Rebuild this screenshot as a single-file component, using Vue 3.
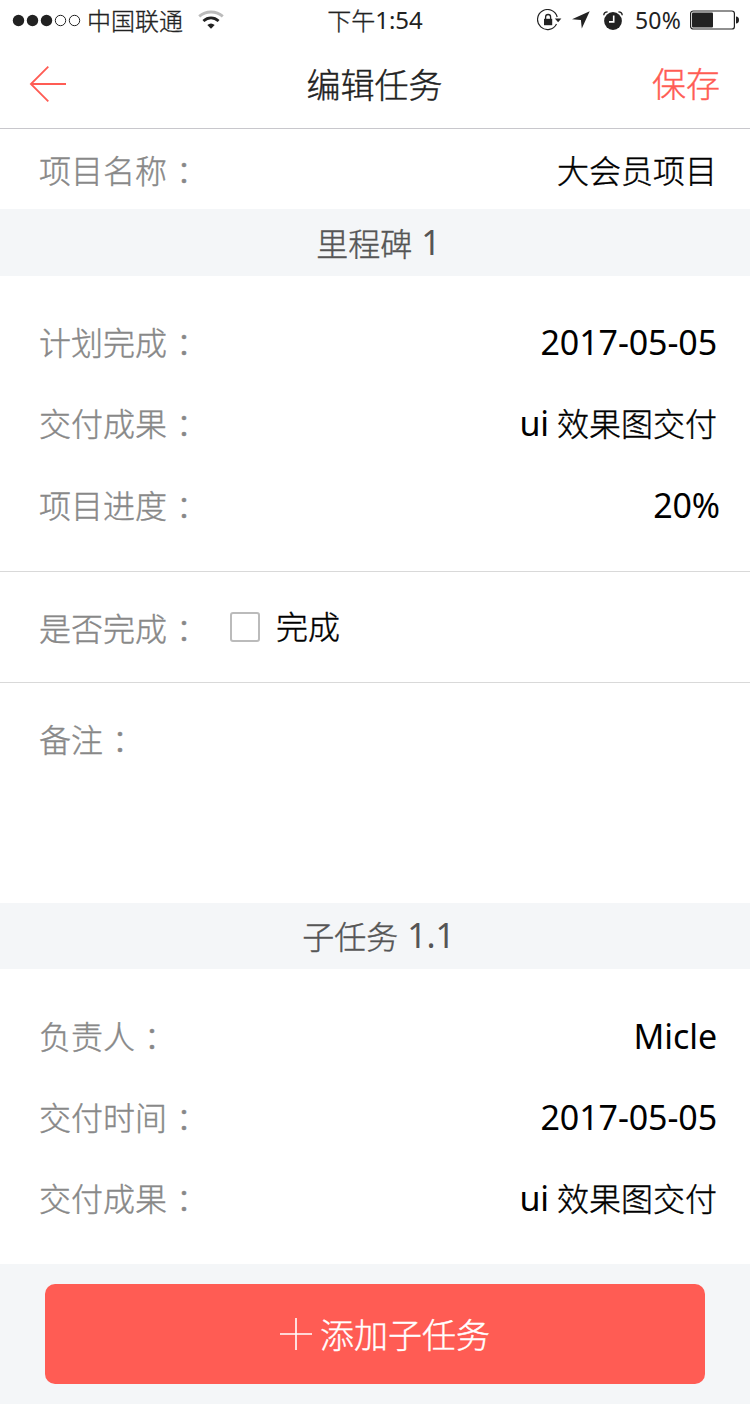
<script setup>
const planRows = [
  { label: '计划完成', latin: '2017-05-05', cjk: '' },
  { label: '交付成果', latin: 'ui', cjk: '效果图交付' },
  { label: '项目进度', latin: '20%', cjk: '', cls: 'flush' },
]
const subRows = [
  { label: '负责人', latin: 'Micle', cjk: '' },
  { label: '交付时间', latin: '2017-05-05', cjk: '' },
  { label: '交付成果', latin: 'ui', cjk: '效果图交付' },
]
</script>

<template>
  <div class="page">
    <div class="status">
      <div class="left">
        <svg class="dots" width="70" height="14" viewBox="0 0 70 14">
          <g fill="#222"><circle cx="6.5" cy="7.5" r="5.7" /><circle cx="20.5" cy="7.5" r="5.7" /><circle cx="34.5" cy="7.5" r="5.7" /></g>
          <g fill="none" stroke="#222" stroke-width="1"><circle cx="48.5" cy="7.5" r="5.2" /><circle cx="62.5" cy="7.5" r="5.2" /></g>
        </svg>
        <span class="carrier">中国联通</span>
        <svg class="wifi" width="26" height="20" viewBox="0 0 26 20">
          <path d="M1.2 6.4C7.8.5 18.2.5 24.8 6.4" fill="none" stroke="#bbb" stroke-width="2.8" />
          <path d="M5.4 11C10 7 16 7 20.6 11" fill="none" stroke="#222" stroke-width="2.8" />
          <path d="M9.3 15Q13 12 16.7 15L13 18.8Z" fill="#222" />
        </svg>
      </div>
      <div class="time"><span>下午</span><span class="lt">1:54</span></div>
      <div class="right">
        <svg class="lock" width="26" height="22" viewBox="0 0 26 22">
          <path d="M20.2 8A10 10 0 1 0 19.5 15" fill="none" stroke="#222" stroke-width="1.2" />
          <path d="M17.8 9.4h6.6l-3.3 3.8z" fill="#222" />
          <path d="M7 9.8h8.2v6.4H7z" fill="#222" />
          <path d="M8.6 10V8a2.5 2.5 0 0 1 5 0v2" fill="none" stroke="#222" stroke-width="1.3" />
        </svg>
        <svg class="loc" width="18" height="18" viewBox="0 0 18 18"><path d="M17.7.2L0 8.2l8.9.9.9 8.4z" fill="#222" /></svg>
        <svg class="alarm" width="20" height="19" viewBox="0 0 20 19">
          <circle cx="10" cy="10" r="8.9" fill="#222" />
          <path d="M.8 4.3Q.9 1 4.6.9M15.4.9Q19.1 1 19.2 4.3" fill="none" stroke="#222" stroke-width="1.4" />
          <path d="M10.7 4.6v6.3H6" fill="none" stroke="#fff" stroke-width="1.6" />
        </svg>
        <span class="pct">50%</span>
        <svg class="bat" width="50" height="20" viewBox="0 0 50 20">
          <rect x=".6" y="1" width="43.8" height="18" rx="2.6" fill="none" stroke="#222" stroke-width="1.2" />
          <rect x="2" y="2.6" width="21" height="14.8" rx="1" fill="#222" />
          <path d="M46 6.6Q49 6.7 49 10T46 13.4z" fill="#222" />
        </svg>
      </div>
    </div>

    <header class="nav">
      <svg class="back" width="38" height="38" viewBox="0 0 38 38"><path d="M37 19H2M19.3 1.6L1.9 19l17.4 17.3" fill="none" stroke="#ff5c54" stroke-width="1.8" /></svg>
      <h1>编辑任务</h1>
      <span class="save">保存</span>
    </header>

    <div class="row project">
      <span class="label">项目名称<i>：</i></span>
      <span class="value"><span>大会员项目</span></span>
    </div>

    <div class="band"><span>里程碑</span><b>1</b></div>

    <section class="group plan">
      <div v-for="r in planRows" :key="r.label" class="row">
        <span class="label">{{ r.label }}<i>：</i></span>
        <span class="value" :class="r.cls"><b>{{ r.latin }}</b><span v-if="r.cjk">{{ r.cjk }}</span></span>
      </div>
    </section>

    <div class="done">
      <span class="label">是否完成<i>：</i></span>
      <span class="box"></span>
      <span class="done-text">完成</span>
    </div>

    <div class="remark"><span class="label">备注<i>：</i></span></div>

    <div class="band sub"><span>子任务</span><b>1.1</b></div>

    <section class="group">
      <div v-for="r in subRows" :key="r.label" class="row">
        <span class="label">{{ r.label }}<i>：</i></span>
        <span class="value"><b>{{ r.latin }}</b><span v-if="r.cjk">{{ r.cjk }}</span></span>
      </div>
    </section>

    <footer>
      <div class="add">
        <svg width="32" height="32" viewBox="0 0 32 32"><path d="M0 16h32M16 0v32" stroke="#fff" stroke-width="1.6" /></svg>
        <span>添加子任务</span>
      </div>
    </footer>
  </div>
</template>

<style>
body { background: #fff; }
</style>

<style scoped>
* { box-sizing: border-box; }
.page {
  width: 750px; height: 1404px; background: #fff; color: #000; overflow: hidden;
  display: flex; flex-direction: column;
  font-family: "Noto Sans CJK SC", sans-serif; font-weight: 300; font-size: 32px; line-height: 40px;
  -webkit-text-stroke: 0.4px currentColor;
}
.page > * { flex: none; }
b, .lt, .pct { font-family: "Noto Sans", "Open Sans", sans-serif; font-weight: 400; -webkit-text-stroke: 0; }
b { font-size: 34px; letter-spacing: -0.1px; }
i { font-style: normal; font-family: "Noto Sans CJK JP", sans-serif; position: relative; top: 2px; left: 1px; }
svg { display: block; flex: none; }

.status { height: 40px; display: grid; grid-template-columns: 1fr auto 1fr; align-items: center; font-size: 24px; color: #222; -webkit-text-stroke-width: 0.3px; }
.left, .right, .time { display: flex; align-items: center; height: 40px; }
.left { padding-left: 12px; }
.carrier { margin-left: 5px; }
.wifi { margin-left: 15px; }
.right { justify-content: flex-end; padding-right: 10px; }
.loc { margin-left: 9px; }
.alarm { margin-left: 13px; }
.pct { margin-left: 12px; font-size: 23px; letter-spacing: 0.2px; }
.bat { margin-left: 9px; }
.time .lt { font-size: 24px; }

.nav { height: 89px; border-bottom: 1px solid #c8c7cc; display: grid; grid-template-columns: 1fr auto 1fr; align-items: center; padding: 0 30px 0 29px; }
h1 { margin: 0; font-size: 34px; font-weight: 300; color: #222; }
.save { justify-self: end; font-size: 34px; color: #ff5c54; margin-top: -2px; }

.row { display: flex; justify-content: space-between; align-items: center; padding: 0 33px 0 39px; height: 81px; }
.row.project { height: 80px; padding-bottom: 1px; }
.label { color: #888; white-space: nowrap; }
.group .label { margin-top: -2px; }
.value { display: flex; align-items: center; gap: 8px; white-space: nowrap; }
.value.flush { margin-right: -3px; }
.value b + span { margin-top: -1px; }

.band { height: 67px; background: #f4f6f8; color: #555; display: flex; align-items: center; justify-content: center; gap: 9px; padding: 0 0 2px 7px; }
.band.sub { height: 66px; }
.group { height: 295px; padding-top: 26px; }
.plan { border-bottom: 1px solid #d9d9d9; height: 296px; padding-top: 25px; }
.plan .row:last-child { height: 83px; }

.done { height: 111px; border-bottom: 1px solid #d9d9d9; display: flex; align-items: center; padding-left: 39px; }
.done .label { margin-top: -1px; }
.box { width: 30px; height: 30px; border: 2px solid #bbb; border-radius: 3px; margin-left: 31px; }
.done-text { margin: -4px 0 0 16px; }
.remark { height: 220px; padding: 35px 39px 0; }

footer { height: 140px; background: #f4f6f8; padding: 20px 45px; }
.add { height: 100px; border-radius: 10px; background: #ff5c54; color: #fff; font-size: 34px; display: flex; align-items: center; justify-content: center; gap: 8px; padding-left: 20px; }
</style>
